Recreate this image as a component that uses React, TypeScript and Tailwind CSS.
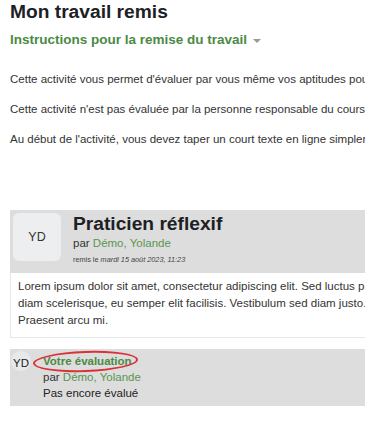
import React from 'react';

const green = 'text-[#4a8a44]';

const App = () => {
  return (
    <div className="w-[365px] h-[430px] overflow-hidden bg-white font-['Liberation_Sans',Arial,sans-serif] text-[#222]">
      <div className="w-[900px] pl-[10px]">
        {/* Page header */}
        <h2 className="text-[19.2px] leading-[24px] font-bold text-[#1d2125]">Mon travail remis</h2>
        <div className="mt-[6px] flex items-center gap-[6px] text-[13.5px] leading-[20px] font-bold">
          <span className={green}>Instructions pour la remise du travail</span>
          <span className="mt-[1px] h-0 w-0 border-x-[4px] border-t-[4px] border-x-transparent border-t-[#999]" />
        </div>

        {/* Intro */}
        <div className="mt-[20px] space-y-[12px] text-[11.5px] leading-[18px] text-[#333] whitespace-nowrap">
          <p>Cette activité vous permet d'évaluer par vous même vos aptitudes pour la pratique réflexive.</p>
          <p>Cette activité n'est pas évaluée par la personne responsable du cours.</p>
          <p>Au début de l'activité, vous devez taper un court texte en ligne simplement pour vous exercer.</p>
        </div>

        {/* Submission */}
        <div className="mt-[62px] w-[700px]">
          <div className="flex h-[63px] bg-[#dddddd] p-[3px]">
            <div className="flex h-[48px] w-[48px] shrink-0 items-center justify-center rounded-[6px] bg-[#eceef0] text-[12.5px] text-[#333]">
              YD
            </div>
            <div className="ml-[12px] flex flex-col">
              <div className="text-[19.2px] leading-[22px] font-bold text-[#1d2125]">Praticien réflexif</div>
              <div className="text-[11.5px] leading-[16px] text-[#333]">
                par <span className="text-[#5a9650]">Démo, Yolande</span>
              </div>
              <div className="mt-[4px] text-[7.3px] leading-[10px] text-[#444]">
                remis le <i>mardi 15 août 2023, 11:23</i>
              </div>
            </div>
          </div>
          <div className="h-[65px] border-x border-b border-[#e6e6e6] px-[7px] pt-[5px] text-[11.5px] leading-[17px] text-[#333] whitespace-nowrap">
            <div>Lorem ipsum dolor sit amet, consectetur adipiscing elit. Sed luctus purus sed lorem</div>
            <div>diam scelerisque, eu semper elit facilisis. Vestibulum sed diam justo. Sed et lectus</div>
            <div>Praesent arcu mi.</div>
          </div>
        </div>

        {/* Evaluation */}
        <div className="mt-[11px] flex h-[57px] w-[700px] bg-[#dddddd] pt-[2px]">
          <div className="ml-[1px] flex h-[20px] w-[20px] shrink-0 items-center justify-center rounded-full bg-[#e8e9ea] pt-[5px] text-[11.5px] text-[#222]">
            YD
          </div>
          <div className="ml-[12px] flex flex-col pt-[2px] text-[11.5px] leading-[16px]">
            <div className="relative">
              <span className={`font-bold ${green}`}>Votre évaluation</span>
              <span className="absolute left-[-10px] top-[-2px] h-[21px] w-[105px] -rotate-[2deg] rounded-[50%] border-[2px] border-[#d9333a]" />
            </div>
            <div className="text-[#333]">
              par <span className="text-[#5a9650]">Démo, Yolande</span>
            </div>
            <div className="text-[#222]">Pas encore évalué</div>
          </div>
        </div>
      </div>
    </div>
  );
};

export default App;
